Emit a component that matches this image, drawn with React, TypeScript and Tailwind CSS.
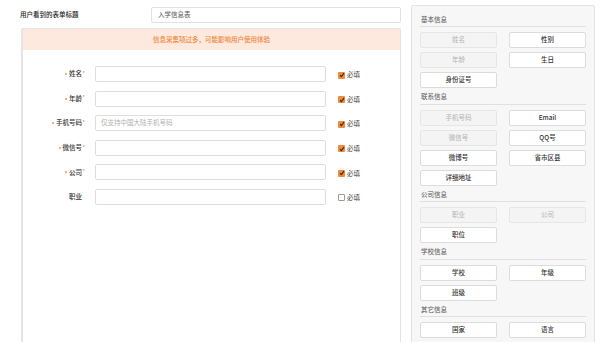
const font = { fontFamily: '"Noto Sans CJK SC", "Noto Sans", sans-serif' }

const fields = [
  { label: '姓名', required: true },
  { label: '年龄', required: true },
  { label: '手机号码', required: true, placeholder: '仅支持中国大陆手机号码' },
  { label: '微信号', required: true },
  { label: '公司', required: true },
  { label: '职业', required: false },
]

type Item = { name: string; used?: boolean }

const sections: { title: string; items: Item[] }[] = [
  {
    title: '基本信息',
    items: [{ name: '姓名', used: true }, { name: '性别' }, { name: '年龄', used: true }, { name: '生日' }, { name: '身份证号' }],
  },
  {
    title: '联系信息',
    items: [
      { name: '手机号码', used: true },
      { name: 'Email' },
      { name: '微信号', used: true },
      { name: 'QQ号' },
      { name: '微博号' },
      { name: '省市区县' },
      { name: '详细地址' },
    ],
  },
  {
    title: '公司信息',
    items: [{ name: '职业', used: true }, { name: '公司', used: true }, { name: '职位' }],
  },
  {
    title: '学校信息',
    items: [{ name: '学校' }, { name: '年级' }, { name: '班级' }],
  },
  {
    title: '其它信息',
    items: [{ name: '国家' }, { name: '语言' }],
  },
]

function Check({ on }: { on: boolean }) {
  if (!on) {
    return <span className="block w-[7px] h-[7px] rounded-[1px] border border-[#9a9a9a] bg-white" />
  }
  return (
    <span className="flex items-center justify-center w-[7px] h-[7px] rounded-[1px] bg-[#f08a3c]">
      <svg width="6" height="6" viewBox="0 0 6 6">
        <path d="M1 3.2 L2.4 4.6 L5 1.2" fill="none" stroke="#3a2a1a" strokeWidth="1.1" />
      </svg>
    </span>
  )
}

export default function App() {
  return (
    <div className="w-[600px] h-[342px] bg-white overflow-hidden flex text-[#333]" style={font}>
      {/* Left side */}
      <div className="flex flex-col w-[401px] shrink-0">
        <div className="flex items-center h-[28px] pt-[1px]">
          <span className="ml-[20px] w-[131px] text-[6.5px] font-medium text-[#222]">用户看到的表单标题</span>
          <div className="flex items-center w-[250px] h-[16px] border border-[#e2e2e2] rounded-[2px] bg-white pl-[6px] text-[6.5px] text-[#555]">
            入学信息表
          </div>
        </div>

        <div className="ml-[21px] w-[380px] flex-1 border-l-2 border-r border-t border-[#e4e4e4] rounded-t-[2px]">
          <div className="h-[21px] bg-[#fde9de] flex items-center justify-center text-[6.5px] text-[#f0873a] font-medium">
            信息采集项过多，可能影响用户使用体验
          </div>

          <div className="flex flex-col gap-[8.6px] pt-[16px]">
            {fields.map((f) => (
              <div key={f.label} className="flex items-center h-[16px]">
                <div className="w-[62px] flex justify-end items-center text-[6.5px] font-medium text-[#333]">
                  {f.required && <span className="w-[2px] h-[2px] rounded-full bg-[#f39a55] mr-[2px]" />}
                  <span>{f.label}</span>
                  {f.required ? (
                    <span className="text-[#f25a3a] text-[5px] -mt-[3px] ml-[0.5px]">*</span>
                  ) : (
                    <span className="w-[3px]" />
                  )}
                </div>
                <div className="ml-[10px] w-[231px] h-[16px] border border-[#dedede] rounded-[2px] bg-white flex items-center pl-[5px] text-[6.5px] text-[#b0b0b0]">
                  {f.placeholder}
                </div>
                <div className="ml-[12px] flex items-center gap-[2px] mt-[2px]">
                  <Check on={f.required} />
                  <span className="text-[6.5px] text-[#444]">必填</span>
                </div>
              </div>
            ))}
          </div>
        </div>
      </div>

      {/* Right side */}
      <div className="ml-[10px] mt-[5px] w-[184px] h-[360px] bg-[#f7f7f7] border border-[#e2e2e2] rounded-[2px] px-[8px] pt-[8px]">
        {sections.map((s, i) => (
          <div key={s.title} className={i === 0 ? '' : 'mt-[3.5px]'}>
            <div className="h-[13px] flex items-center border-b border-[#e0e0e0] text-[6.5px] text-[#555]">
              <span className="ml-[1px] -mt-[1px]">{s.title}</span>
            </div>
            <div className="grid grid-cols-2 gap-x-[12px] gap-y-[4px] mt-[5px]">
              {s.items.map((it) => (
                <div
                  key={it.name}
                  className={
                    it.used
                      ? 'h-[16px] rounded-[2px] border border-[#e6e6e6] bg-[#f4f4f4] flex items-center justify-center text-[6.5px] text-[#b3b3b3]'
                      : 'h-[16px] rounded-[2px] border border-[#dcdcdc] bg-white flex items-center justify-center text-[6.5px] font-medium text-[#333]'
                  }
                >
                  {it.name}
                </div>
              ))}
            </div>
          </div>
        ))}
      </div>
    </div>
  )
}
